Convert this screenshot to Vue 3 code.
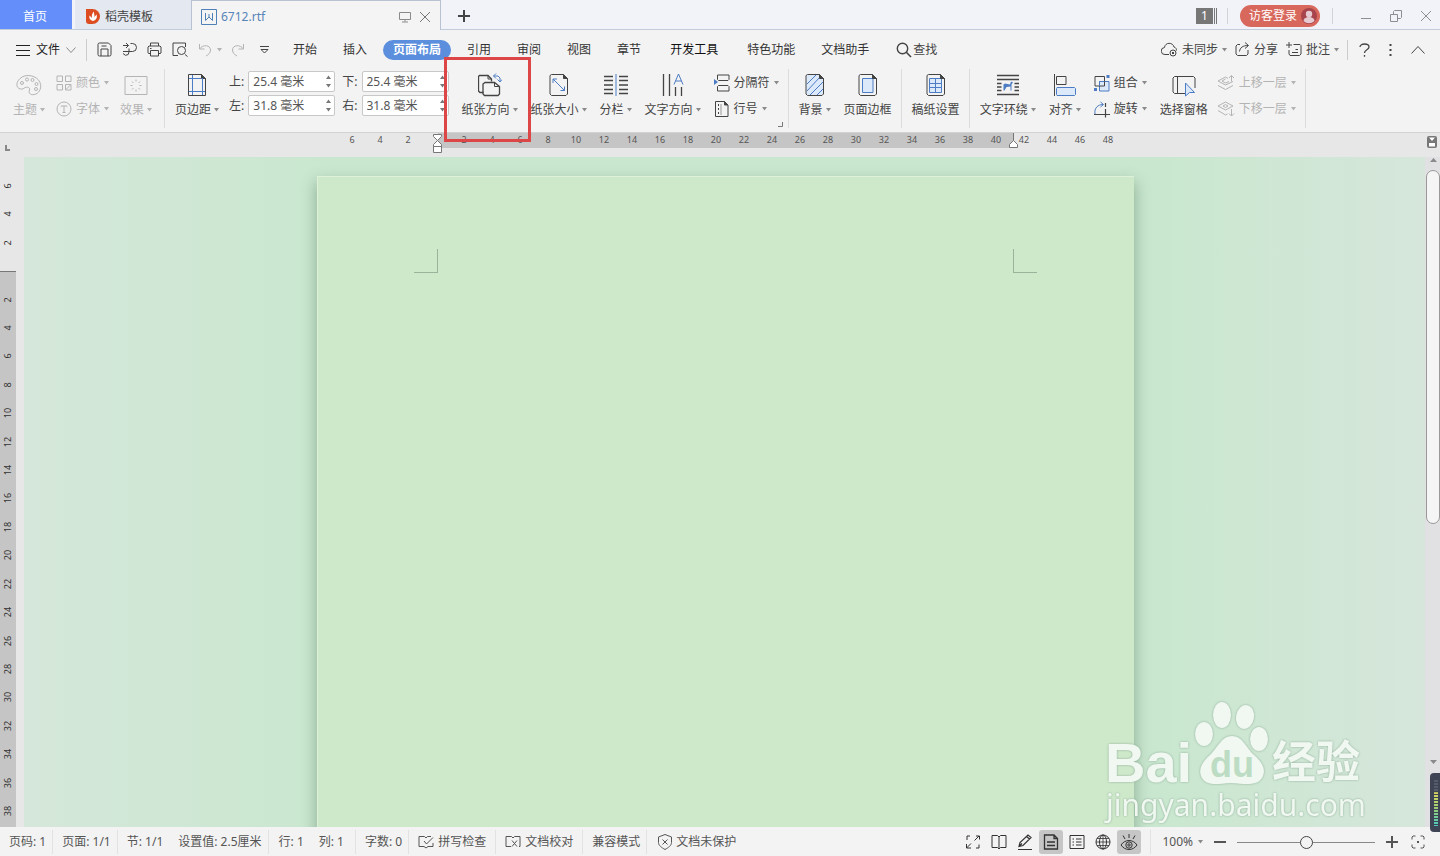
<script setup>
import { h, ref } from "vue";

// 图标：[宽, 高, 图形]
const icons = {
  caret: [5, 4, '<path d="M0 0h5L2.500 3.500z" fill="currentColor" stroke="none"/>'],
  docer: [14, 15, '<path d="M0 0h6.500a7.200 7.200 0 0 1 0 15H3a3 3 0 0 1-3-3z" fill="#dd4d22" stroke="none"/><path d="M7 12C3.500 11 3 8.500 3.500 6.500L6 9C5.500 6.500 6 4.500 8 2.500 8 5 8.500 6 8.500 8L10.500 5.500C11.500 8.500 10.500 11 7 12z" fill="#fff" stroke="none"/>'],
  word: [16, 16, '<g stroke="#4f80b8"><path d="M.5 .5h15v15H.5z"/><path d="M4.500 4v7.500L8 8l3.500 3.500V4M8 8V5"/></g>'],
  monitor: [12, 12, '<path d="M.5 1.500h11v7H.5zM6 8.500v2M3 11h6"/>'],
  close: [12, 12, '<path d="M1 1l10 10M11 1L1 11"/>'],
  plus: [12, 12, '<path d="M6 0v12M0 6h12" stroke-width="2"/>'],
  minus: [12, 12, '<path d="M0 6h12" stroke-width="2"/>'],
  restore: [12, 12, '<path d="M.5 4.500h7v7h-7zM3.500 4.500v-3l1-1h7v7l-1 1h-3"/>'],
  min: [12, 12, '<path d="M1 8.500h10"/>'],
  avatar: [16, 16, '<circle cx="8" cy="8" r="8" fill="#a8444c" stroke="none"/><circle cx="8" cy="6" r="3.200" fill="#e6ccd2" stroke="none"/><path d="M2.500 13a5.500 4 0 0 1 11 0 8 8 0 0 1-11 0z" fill="#e6ccd2" stroke="none"/>'],
  menu: [14, 12, '<path d="M0 1.500h14M0 6.500h14M0 11.500h14"/>'],
  down: [10, 8, '<path d="M.5 1.500L5 6.500l4.500-5"/>'],
  save: [15, 15, '<path d="M1 2.500a1.500 1.500 0 0 1 1.500-1.500h9L14 3.500v9a1.500 1.500 0 0 1-1.500 1.500h-10A1.500 1.500 0 0 1 1 12.500zM4 14V7h7v7M4.500 4h5"/>'],
  pdf: [15, 15, '<path d="M1 3.500h5.500M4 1l2.500 2.500L4 6M8.500 1.500h2a4 4 0 0 1 0 8H1M7 6.500v3.500a3.300 3.300 0 0 1-3.500 3.300L1 11.500"/>'],
  print: [15, 15, '<path d="M3.500 4V1h8v3M3.500 11.500h-2L1 11V5l1-1h11l1 1v6l-1 .5h-1.500M3.500 8.500h8V14h-8zM3 6.500h1.500"/>'],
  preview: [16, 15, '<path d="M6 13.500H1V1h12.500v4M13 12.500l2.500 2"/><circle cx="9.500" cy="8.500" r="4"/>'],
  undo: [14, 14, '<path d="M1.500 1v5h5M1.500 6C5 1 12.500 2 12.500 7c0 3-2 4.500-4.500 6"/>'],
  redo: [14, 14, '<path d="M12.500 1v5h-5M12.500 6C9 1 1.500 2 1.500 7c0 3 2 4.500 4.500 6"/>'],
  more: [9, 8, '<path d="M0 .5h9M1 3.500h7L4.500 7z"/>'],
  search: [16, 16, '<circle cx="6.500" cy="6.500" r="5.200" stroke-width="1.400"/><path d="M10.300 10.300L15 15" stroke-width="1.600"/>'],
  cloud: [17, 15, '<path d="M8 12.500H4a3.500 3.500 0 0 1-.5-7C4 0 12 0 13 5c1.800.5 2.500 1.800 2.500 3.500"/><circle cx="12" cy="11" r="3"/><path d="M11 10l2 2M13 10l-2 2"/>'],
  share: [15, 15, '<path d="M5 2.500H2.500L1 4v8l1.500 1.500h9L13 12V8M4.500 9.500C5 5.500 8 3.500 13 3.500M10 .5l3.500 3L10 6.500"/>'],
  note: [16, 15, '<path d="M3 0v6M0 3h6M7.500 2.500H14l1 1V12l-1.500 1.500H4L3 12V8M6 10.500h6M9.500 7.500H12"/>'],
  help: [11, 14, '<path d="M1 4C1 0 10 0 10 4c0 3-4.500 2.500-4.500 6M5.500 12v1.700" stroke-width="1.300"/>'],
  dots: [3, 14, '<path d="M.5 1h2v2h-2zM.5 6h2v2h-2zM.5 11h2v2h-2z" fill="currentColor" stroke="none"/>'],
  up: [14, 10, '<path d="M.5 8.500l6.500-7 6.500 7"/>'],
  theme: [26, 24, '<path d="M7 16C0 17-1 10 4 5.500c6-5.500 17-3 20 4 2 5-.5 10-4 11.500-5 2-8-.5-6.500-4 1-3-3.500-4-6.500-1z"/><circle cx="6" cy="10" r="1.500"/><circle cx="11" cy="6.500" r="1.500"/><circle cx="16.500" cy="7" r="1.500"/><circle cx="20.500" cy="11" r="1.500"/><circle cx="20" cy="16" r="1.500"/>'],
  colors: [16, 16, '<path d="M1 1h5.500v5.500H1zM9.500 1H15v5.500H9.500zM1 9.500h5.500V15H1zM9.500 9.500H15V15H9.500zM10 14.500l4.500-4.500"/>'],
  font: [16, 16, '<circle cx="8" cy="8" r="7"/><path d="M5 5.500V5h6v.5M8 5v6.500M6.500 11.500h3"/>'],
  effect: [24, 24, '<path d="M1 3.500h22v18H1z"/><path d="M12 6.500v2M12 16.500v2M6.500 12.500h2M15.500 12.500h2M8 8.500l1.500 1.500M16 8.500L14.500 10M8 16.500L9.500 15M16 16.500L14.500 15"/>'],
  margins: [20, 24, '<path d="M1.500 1.500h13l4 4v17h-17z"/><path d="M14.500 1.500v4h4z" fill="currentColor"/><path d="M5.500 2v20M15.500 5v17M2 5.500h12M2 18.500h16" stroke="#4c7cc4"/>'],
  orient: [24, 24, '<path d="M5.500 19.500H2L.5 18V3.500L1.500 2.500H10L13.500 6v2.500" stroke-width="1.300"/><path d="M7 9.500h9.500l5 4v7.500L20 22.500H6.500L5 21V11z" stroke-width="1.300"/><path d="M10 2.500V6h3.500M16.500 9.500v4h5" /><path d="M18 .5l-2.500 2.500L18 5.500M15.500 3H20l2 2v4M19.500 6.500L22 9l2-2.500" stroke="#4c7cc4"/>'],
  size: [20, 24, '<path d="M1 2.500L2.500 1.500h12l4 4v15.500L17 22.500H2.500L1 21z"/><path d="M14.500 1.500v4h4z" fill="currentColor"/><path d="M4 10V6h4M4 6l11.500 11.500M15.500 13.500v4h-4" stroke="#4c7cc4"/>'],
  columns: [24, 24, '<path d="M0 3.500h9M0 7.500h9M0 12h9M0 16.500h9M0 20.500h9M15 3.500h9M15 7.500h9M15 12h9M15 16.500h9M15 20.500h9" stroke-width="1.300"/><path d="M12 1v22" stroke="#4c7cc4"/>'],
  textdir: [22, 24, '<path d="M1.500 1v22M7.500 1v22M13.500 14v9M19.500 14v9" stroke-width="1.300"/><path d="M12 11.500L16.500 1 21 11.500M13.500 8h6" stroke="#4c7cc4"/>'],
  breaks: [16, 18, '<path d="M3.500 1v4.500l1 1H14l1-1V1M3.500 17v-4.500l1-1H14l1 1V17zM3.500 1H15"/><path d="M0 5v6l4-3z" fill="#4c7cc4" stroke="none"/>'],
  lineno: [16, 18, '<path d="M1.500 1.500h9l3.500 3.500v11.500H1.500z"/><path d="M10.500 1.500V5H14z" fill="currentColor"/><path d="M4.500 4v11" stroke-dasharray="2 2"/><path d="M7 4v11" stroke="#999"/>'],
  backdrop: [20, 24, '<path d="M1 2.500L2.500 1.500h12l4 4v15.500L17 22.500H2.500L1 21z" fill="#dce9fa"/><path d="M2 11l9-9M2 18L14.500 4.500M5 22L18 9M12 22l6-6" stroke="#4c7cc4"/><path d="M14.500 1.500v4h4z" fill="currentColor"/>'],
  border: [20, 24, '<path d="M1 2.500L2.500 1.500h12l4 4v15.500L17 22.500H2.500L1 21z"/><path d="M4.500 5.500h10.500v14H4.500z" stroke="#4c7cc4" fill="#dce9fa"/><path d="M14.500 1.500v4h4z" fill="currentColor"/>'],
  grid: [20, 24, '<path d="M1 2.500L2.500 1.500h12l4 4v15.500L17 22.500H2.500L1 21z"/><path d="M3.500 5.500h12v14h-12zM3.500 10.500h12M3.500 14.500h12M9.500 5.500v14" stroke="#4c7cc4" fill="#dce9fa"/><path d="M14.500 1.500v4h4z" fill="currentColor"/>'],
  wrap: [24, 24, '<path d="M1 2.500h22M1 6.500h22M1 10.500h4.500M18.500 10.500H23M1 14h4.500M18.500 14H23M1 17.500h4.500M18.500 17.500H23M1 21.500h22" stroke-width="1.300"/><path d="M7.500 17.500v-6l1.500-1 5 1 1-3 2 1-1.500 2v6h-1v-4l-4 .5-2 3.500z" fill="#4c7cc4" stroke="none"/>'],
  align: [24, 24, '<path d="M1.500 1v22M3.500 3.500H13v8H3.500z"/><path d="M4 14.500h17.500l1 1v6l-1 1H4l-.5-1v-6z" stroke="#4c7cc4" fill="#dce9fa"/>'],
  group: [16, 17, '<path d="M5.500 6.500H15V16H5.500z" stroke="#4c7cc4" fill="#dce9fa"/><path d="M1 1.500h9.500V11H1z"/><path d="M5.500 11V6.500h5" stroke="#4c7cc4"/><path d="M12.500 0h3v3h-3zM0 13h3v3H0z" fill="#4c7cc4" stroke="none"/>'],
  rotate: [16, 17, '<path d="M1 13C0 7 4 3.500 9 3.500M6.500 1l3 2.500-3 2.500" stroke="#4c7cc4"/><path d="M0 13.500h16M11.500 8v8.500M11.500 2v4" stroke-width="1.200"/>'],
  pane: [24, 24, '<path d="M13 20.500H2.500L1 19V5l1.500-1.500h19L23 5v10M5.500 3.500v17"/><path d="M13.500 10l9 9.500h-5L13.500 23z" stroke="#4c7cc4" fill="#dce9fa"/>'],
  forward: [18, 16, '<path d="M11 3.500L8.500 2 1 6l7.500 4L16 6.500M1 10.500l7.500 4 7.500-4M8.500 4L5 6l3.500 2L12 6.500M14.500 6.500V.5M12 3L14.500.5 17 3"/>'],
  backward: [18, 16, '<path d="M8.500 1L1 5l7.500 4L16 5zM8.500 3.500L6 5l2.500 1.500L11 5zM1 9.500L8.500 14l2-1M14.500 8v7M12 12.500l2.500 2.500 2.500-2.500"/>'],
  launcher: [5, 5, '<path d="M4.500 0v4.500H0"/>'],
  spell: [16, 14, '<path d="M8 3L6.500 1.500H1v10h5L8 13l2-1.500h5V8M8 3l1.500-1.500H13M6 6l2.500 3L15 2.500"/>'],
  proof: [16, 14, '<path d="M6 11.500H1v-10h5.500L8 3l1.500-1.500H15v10h-1M7 5.500l5 6M12 5.500l-5 6"/>'],
  shield: [14, 16, '<path d="M7 .5L13.500 3v5.500c0 3-3 5-6.500 7-3.500-2-6.500-4-6.500-7V3zM4.500 5.500l5 5M9.500 5.500l-5 5"/>'],
  full: [16, 16, '<path d="M2 6V2h3M11 2h3.500v3.500M14 10.500V14h-3M6 14H1.500v-4M14 2L9.500 6.500M1.500 14L6 9.500"/>'],
  book: [16, 16, '<path d="M8 3L6.500 1.500H1v12h5.500L8 15l1.500-1.500H15v-12H9.500zM8 3v12"/>'],
  pen: [16, 16, '<path d="M1 15.500h14M2 12.500l1-4L11 1l3 2.500-8 8zM9.500 2.500l3 2.500M2 12.500l3-3" stroke-width="1.200"/>'],
  doc: [16, 16, '<path d="M1.500 1h9.500l3.500 3.500V15h-13zM4 8h8M4 11.500h8M11 1v3.500h3.500" stroke-width="1.300"/>'],
  list: [16, 16, '<path d="M1 1.500h14v13H1zM3.500 5H5M3.500 8H5M3.500 11H5M7 5h5.500M7 8h5.500M7 11h5.500"/>'],
  globe: [16, 16, '<circle cx="8" cy="8" r="7"/><ellipse cx="8" cy="8" rx="3.500" ry="7"/><path d="M8 1v14M1 8h14M2 4.500h12M2 11.500h12" stroke-width=".8"/>'],
  eye: [18, 18, '<path d="M1 12c4-6 12-6 16 0-4 6-12 6-16 0zM9 1v4M3 2.500l2 3.500M15 2.500L13 6"/><circle cx="9" cy="12" r="3.200"/><circle cx="9" cy="12" r="1.200"/>'],
  fit: [14, 14, '<path d="M1 4.500V2l1-1h2.500M9.500 1H12l1 1v2.500M13 9.500V12l-1 1H9.500M4.500 13H2l-1-1V9.500"/><path d="M6 6h2v2H6z" fill="currentColor" stroke="none"/>'],
  rulerbtn: [10, 12, '<path d="M0 0h10v12H0z" fill="#777" stroke="none" /><path d="M2 1.500h6L5 5zM2 7h6v3.500H2z" fill="#fff" stroke="none"/>'],
  tri: [7, 4, '<path d="M0 0h7L3.500 4z" fill="#8a8a8a" stroke="none"/>'],
  indent: [9, 19, '<path d="M.5 .5h8v2l-4 4-4-4zM.5 12.500v-2l4-4 4 4v2zM.5 12.500h8v6h-8z" fill="#fff"/>'],
  indentR: [9, 8, '<path d="M.5 7.500v-3l4-4 4 4v3z" fill="#fff"/>'],
};

const Icon = (props) => {
  const [width, height, body] = icons[props.name];
  return h("svg", {
    width,
    height,
    viewBox: `0 0 ${width} ${height}`,
    fill: "none",
    stroke: "currentColor",
    "aria-hidden": "true",
    innerHTML: body,
  });
};
Icon.props = ["name"];

const menus = ["开始", "插入", "页面布局", "引用", "审阅", "视图", "章节", "开发工具", "特色功能", "文档助手"];
const activeMenu = ref("页面布局");

// 页边距
const margins = ref([
  { id: "top", label: "上:", value: "25.4 毫米" },
  { id: "bottom", label: "下:", value: "25.4 毫米" },
  { id: "left", label: "左:", value: "31.8 毫米" },
  { id: "right", label: "右:", value: "31.8 毫米" },
]);

const layoutTools = [
  { icon: "orient", label: "纸张方向", marked: true },
  { icon: "size", label: "纸张大小" },
  { icon: "columns", label: "分栏" },
  { icon: "textdir", label: "文字方向" },
];

// 标尺刻度，0 处不写数字
const scale = (before, after) => {
  const list = [];
  for (let i = -before; i <= after; i += 2) list.push(i === 0 ? "" : Math.abs(i));
  return list;
};
const hScale = scale(6, 48);
const vScale = scale(6, 38);

const views = ["full", "book", "pen", "doc", "list", "globe", "eye"];
const viewNames = ["全屏显示", "阅读版式", "写作模式", "页面视图", "大纲", "Web版式", "护眼模式"];
const zoom = ref(50);
</script>

<template>
  <div class="app">
    <header class="titlebar">
      <button class="home">首页</button>
      <button class="doc-tab"><Icon name="docer" />稻壳模板</button>
      <div class="doc-tab current">
        <Icon name="word" />
        <span class="doc-name">6712.rtf</span>
        <Icon name="monitor" class="grey" />
        <button aria-label="关闭"><Icon name="close" /></button>
      </div>
      <button class="new-tab" aria-label="新建"><Icon name="plus" /></button>
      <div class="window-tools">
        <span class="count">1</span>
        <button class="login">访客登录<Icon name="avatar" /></button>
        <button aria-label="最小化"><Icon name="min" /></button>
        <button aria-label="还原"><Icon name="restore" /></button>
        <button aria-label="关闭窗口"><Icon name="close" /></button>
      </div>
    </header>

    <nav class="menubar">
      <button class="file"><Icon name="menu" />文件<Icon name="down" class="grey" /></button>
      <div class="quick">
        <button aria-label="保存"><Icon name="save" /></button>
        <button aria-label="输出为PDF"><Icon name="pdf" /></button>
        <button aria-label="打印"><Icon name="print" /></button>
        <button aria-label="打印预览"><Icon name="preview" /></button>
        <button class="undo" aria-label="撤销" disabled><Icon name="undo" /><Icon name="caret" /></button>
        <button aria-label="恢复" disabled><Icon name="redo" /></button>
        <button class="quick-more" aria-label="自定义快速访问"><Icon name="more" /></button>
      </div>
      <div class="menus">
        <button
          v-for="menu in menus"
          :key="menu"
          :class="{ active: menu === activeMenu, dev: menu === '开发工具' }"
          @click="activeMenu = menu"
        >
          {{ menu }}
        </button>
      </div>
      <button class="find"><Icon name="search" />查找</button>
      <div class="menu-right">
        <button><Icon name="cloud" />未同步<Icon name="caret" class="grey" /></button>
        <button><Icon name="share" />分享</button>
        <button><Icon name="note" />批注<Icon name="caret" class="grey" /></button>
        <span class="line"></span>
        <button aria-label="帮助"><Icon name="help" /></button>
        <button aria-label="更多"><Icon name="dots" /></button>
        <button aria-label="收起功能区"><Icon name="up" /></button>
      </div>
    </nav>

    <section class="ribbon">
      <div class="group theme-group">
        <button class="big" disabled><Icon name="theme" /><span>主题<Icon name="caret" /></span></button>
        <div class="stack">
          <button disabled><Icon name="colors" />颜色<Icon name="caret" /></button>
          <button disabled><Icon name="font" />字体<Icon name="caret" /></button>
        </div>
        <button class="big" disabled><Icon name="effect" /><span>效果<Icon name="caret" /></span></button>
      </div>

      <div class="group">
        <button class="big"><Icon name="margins" /><span>页边距<Icon name="caret" /></span></button>
        <div class="fields">
          <div v-for="item in margins" :key="item.id" class="field">
            <label :for="item.id">{{ item.label }}</label>
            <div class="spin">
              <input :id="item.id" v-model="item.value" type="text" />
              <div class="arrows">
                <Icon name="caret" class="flip" />
                <Icon name="caret" />
              </div>
            </div>
          </div>
        </div>
        <button v-for="tool in layoutTools" :key="tool.icon" class="big" :class="{ marked: tool.marked }">
          <Icon :name="tool.icon" />
          <span>{{ tool.label }}<Icon name="caret" /></span>
        </button>
        <div class="stack">
          <button><Icon name="breaks" />分隔符<Icon name="caret" /></button>
          <button><Icon name="lineno" />行号<Icon name="caret" /></button>
        </div>
        <Icon name="launcher" class="launcher" />
      </div>

      <div class="group">
        <button class="big"><Icon name="backdrop" /><span>背景<Icon name="caret" /></span></button>
        <button class="big"><Icon name="border" /><span>页面边框</span></button>
      </div>
      <div class="group">
        <button class="big"><Icon name="grid" /><span>稿纸设置</span></button>
      </div>
      <div class="group">
        <button class="big"><Icon name="wrap" /><span>文字环绕<Icon name="caret" /></span></button>
        <button class="big"><Icon name="align" /><span>对齐<Icon name="caret" /></span></button>
        <div class="stack">
          <button><Icon name="group" />组合<Icon name="caret" /></button>
          <button><Icon name="rotate" />旋转<Icon name="caret" /></button>
        </div>
        <button class="big"><Icon name="pane" /><span>选择窗格</span></button>
        <div class="stack layers">
          <button disabled><Icon name="forward" />上移一层<Icon name="caret" /></button>
          <button disabled><Icon name="backward" />下移一层<Icon name="caret" /></button>
        </div>
      </div>
    </section>

    <div class="ruler-bar">
      <span class="tab-stop"></span>
      <div class="h-ruler">
        <div class="h-range">
          <Icon name="indent" class="indent-left" />
          <Icon name="indentR" class="indent-right" />
        </div>
        <span v-for="(n, i) in hScale" :key="i">{{ n }}</span>
      </div>
      <Icon name="rulerbtn" class="ruler-btn" />
    </div>

    <main class="workspace">
      <div class="v-ruler">
        <div class="v-range"></div>
        <span v-for="(n, i) in vScale" :key="i">{{ n }}</span>
      </div>
      <div class="canvas">
        <article class="page">
          <i class="crop crop-left"></i>
          <i class="crop crop-right"></i>
        </article>
        <svg class="watermark" width="270" height="130" viewBox="0 0 270 130">
          <g class="mark">
            <text x="4" y="84" class="brand">Bai</text>
            <ellipse cx="103" cy="36" rx="9" ry="12" />
            <ellipse cx="121" cy="17" rx="9" ry="13" />
            <ellipse cx="144" cy="19" rx="9" ry="12" transform="rotate(10 144 19)" />
            <ellipse cx="158" cy="41" rx="9" ry="12" />
            <path d="M131 38c10 0 14 11 21 18 9 8 14 15 9 24-5 8-16 6-31 5-15 1-24 3-29-5-5-9 1-17 9-24 7-7 11-18 21-18z" />
            <text x="171" y="80" class="jingyan">经验</text>
            <text x="5" y="118" class="url">jingyan.baidu.com</text>
          </g>
          <text x="109" y="79" class="du">du</text>
        </svg>
      </div>
      <div class="scrollbar">
        <Icon name="tri" class="flip" />
        <div class="track"><div class="thumb"></div></div>
        <Icon name="tri" />
        <div class="meter"><i></i></div>
      </div>
    </main>

    <footer class="statusbar">
      <span class="cell">页码: 1</span>
      <span class="cell">页面: 1/1</span>
      <span class="cell"><span>节: 1/1</span><span>设置值: 2.5厘米</span></span>
      <span class="cell pos"><span>行: 1</span><span>列: 1</span></span>
      <span class="cell">字数: 0</span>
      <button class="cell"><Icon name="spell" />拼写检查</button>
      <button class="cell"><Icon name="proof" />文档校对</button>
      <span class="cell">兼容模式</span>
      <button class="cell protect"><Icon name="shield" />文档未保护</button>
      <div class="views">
        <button
          v-for="(view, i) in views"
          :key="view"
          :class="{ on: view === 'doc' || view === 'eye' }"
          :aria-label="viewNames[i]"
        >
          <Icon :name="view" />
        </button>
      </div>
      <div class="zoom">
        <button class="percent">100%<Icon name="caret" class="grey" /></button>
        <button aria-label="缩小" @click="zoom -= 5"><Icon name="minus" /></button>
        <input v-model.number="zoom" type="range" min="0" max="100" aria-label="显示比例" />
        <button aria-label="放大" @click="zoom += 5"><Icon name="plus" /></button>
        <button class="fit" aria-label="最佳显示比例"><Icon name="fit" /></button>
      </div>
    </footer>
  </div>
</template>

<style>
body {
  margin: 0;
  overflow: hidden;
}
</style>

<style scoped>
.app {
  height: 100vh;
  display: flex;
  flex-direction: column;
  background: #f3f3f3;
  color: #444;
  font-family: "Noto Sans", "Noto Sans CJK SC", sans-serif;
  font-size: 12px;
  line-height: 16px;
  white-space: nowrap;
}

.app * {
  box-sizing: border-box;
}

svg {
  display: block;
  flex: none;
}

button {
  display: flex;
  align-items: center;
  padding: 0;
  border: 0;
  background: none;
  color: inherit;
  font: inherit;
}

button:disabled {
  color: #b4b4b4;
}

.grey {
  color: #8a8a8a;
}

.flip {
  transform: rotate(180deg);
}

/* 标题栏 */
.titlebar {
  height: 30px;
  flex: none;
  display: flex;
  background: #f1f3f8;
  border-bottom: 1px solid #c3ccdb;
}

.home {
  width: 72px;
  padding: 4px 2px 0 0;
  justify-content: center;
  background: #648ffa;
  color: #fff;
}

.doc-tab {
  width: 116px;
  margin-left: 3px;
  padding: 4px 11px 0;
  gap: 5px;
  background: #e4e8f0;
}

.doc-tab.current {
  width: 250px;
  height: 30px;
  margin-left: 0;
  padding: 3px 9px 0;
  gap: 4px;
  display: flex;
  align-items: center;
  background: #f4f4f5;
  border: 1px solid #b9c2d3;
  border-bottom: 0;
}

.doc-name {
  flex: 1;
  color: #5784b8;
}

.doc-tab.current button {
  margin-left: 4px;
  color: #777;
}

.new-tab {
  margin-left: 17px;
  padding-top: 3px;
}

.window-tools {
  margin-left: auto;
  padding: 3px 8px 0 0;
  display: flex;
  align-items: center;
  gap: 18px;
}

.count {
  width: 22px;
  height: 16px;
  padding-left: 5px;
  background: linear-gradient(90deg, #777 17px, transparent 17px 18px, #777 18px 19px, transparent 19px 20px, #777 20px 21px, transparent 21px);
  color: #fff;
}

.login {
  position: relative;
  height: 22px;
  width: 80px;
  margin: 0 22px 0 4px;
  padding-left: 9px;
  gap: 4px;
  border-radius: 11px;
  background: #d8685c;
  color: #fff;
}

.login::before,
.login::after {
  content: "";
  position: absolute;
  left: -13px;
  width: 1px;
  height: 16px;
  background: #d0d3d9;
}

.login::after {
  left: 92px;
}

.window-tools button:not(.login) {
  color: #8d8d93;
}

/* 菜单栏 */
.menubar {
  height: 37px;
  flex: none;
  padding: 2px 15px 0 16px;
  display: flex;
  align-items: center;
}

.file {
  height: 22px;
  padding-right: 10px;
  gap: 6px;
  border-right: 1px solid #ccc;
  color: #222;
}

.quick {
  margin-left: 10px;
  display: flex;
  gap: 10px;
}

.quick .undo {
  gap: 5px;
  margin-right: -1px;
}

.quick-more {
  margin: 0 3px 0 5px;
}

.menus {
  margin-left: 8px;
  display: flex;
  color: #333;
}

.menus button {
  height: 20px;
  padding: 0 13px;
}

.menus .active {
  margin: 0 3px;
  padding: 0 10px;
  border-radius: 10px;
  background: #5b8fdd;
  color: #fff;
  font-weight: 700;
}

.menus .dev {
  margin: 0 3px;
  color: #111;
}

.find {
  margin-left: 14px;
  gap: 1px;
}

.menu-right {
  margin-left: auto;
  display: flex;
  align-items: center;
}

.menu-right button {
  gap: 4px;
  margin-right: 8px;
}

.menu-right .line {
  height: 20px;
  margin-right: 11px;
  border-left: 1px solid #ccc;
}

.menu-right .line ~ button {
  margin-right: 19px;
}

.menu-right .line ~ button:last-child {
  margin-right: 0;
}

/* 功能区 */
.ribbon {
  height: 65px;
  flex: none;
  padding: 2px 0 4px;
  display: flex;
}

.group {
  position: relative;
  display: flex;
  align-items: flex-start;
  gap: 13px;
  padding: 2px 9px 0 10px;
  border-right: 1px solid #dcdcdc;
}

.theme-group {
  gap: 11px;
  padding: 2px 12px 0 13px;
}

.big {
  padding-top: 2px;
  flex-direction: column;
  gap: 5px;
}

.big > span {
  display: flex;
  align-items: center;
  gap: 3px;
}

.big span svg,
.stack button svg:last-child {
  color: #8a8a8a;
}

.big:disabled span svg,
.stack button:disabled svg:last-child {
  color: #b4b4b4;
}

.stack {
  padding-top: 3px;
  display: grid;
  gap: 8px;
}

.stack button {
  height: 18px;
  gap: 4px;
}

.layers {
  margin-left: -4px;
}

.fields {
  margin-left: -3px;
  display: grid;
  grid-template-columns: auto auto;
  gap: 3px 7px;
}

.field {
  display: flex;
  align-items: center;
  gap: 4px;
}

.spin {
  width: 87px;
  height: 21px;
  display: flex;
  border: 1px solid #c8c8c8;
  border-radius: 2px;
  background: #fff;
}

.spin input {
  width: 74px;
  padding: 0 0 0 4px;
  border: 0;
  background: none;
  color: #555;
  font: inherit;
}

.arrows {
  flex: 1;
  padding: 3px 0;
  display: flex;
  flex-direction: column;
  align-items: center;
  justify-content: space-between;
  color: #777;
}

.marked {
  position: relative;
}

.marked::after {
  content: "";
  position: absolute;
  z-index: 5;
  inset: -14px -13px -24px -18px;
  border: 3px solid #dc4646;
}

.launcher {
  position: absolute;
  right: 5px;
  bottom: 1px;
  color: #777;
}

/* 水平标尺 */
.ruler-bar {
  position: relative;
  height: 25px;
  flex: none;
  padding: 0 15px 0 26px;
  background: #e7e7e7;
  border-top: 1px solid #d2d2d2;
}

.tab-stop {
  position: absolute;
  left: 5px;
  top: 12px;
  width: 5px;
  height: 6px;
  border: solid #888;
  border-width: 0 0 2px 2px;
}

.h-ruler {
  position: relative;
  width: 817px;
  margin: 0 auto;
  padding-left: 21px;
  display: flex;
  color: #555;
  font-size: 9px;
  line-height: 14px;
}

.h-ruler span {
  position: relative;
  width: 28px;
  flex: none;
  text-align: center;
}

.h-range {
  position: absolute;
  left: 121px;
  right: 120px;
  top: 0;
  height: 15px;
  background: #c5c5c5;
  border-right: 1px solid #777;
}

.indent-left,
.indent-right {
  position: absolute;
  color: #777;
  left: -5px;
  top: 1px;
}

.indent-right {
  left: auto;
  right: -5px;
  top: 7px;
}

.ruler-btn {
  position: absolute;
  right: 3px;
  top: 3px;
  border-radius: 2px;
}

/* 编辑区 */
.workspace {
  flex: 1;
  min-height: 0;
  display: flex;
}

.v-ruler {
  position: relative;
  width: 24px;
  padding: 23px 8px 10px 0;
  display: flex;
  flex-direction: column;
  justify-content: space-between;
  align-items: center;
  background: #e7e7e7;
  color: #333;
  font-size: 9px;
  line-height: 12px;
}

.v-ruler span {
  position: relative;
  width: 12px;
  height: 12px;
  display: flex;
  justify-content: center;
  transform: rotate(-90deg);
}

.v-range {
  position: absolute;
  left: 0;
  top: 114px;
  bottom: 0;
  width: 16px;
  background: #c5c5c5;
  border-top: 1px solid #777;
}

.canvas {
  position: relative;
  flex: 1;
  overflow: hidden;
  padding: 19px 0 0 2px;
  background: linear-gradient(90deg, #d5e7da, #c9e7cf 22%, #c9e7cf 81%, #d6e6db);
}

.page {
  position: relative;
  width: 817px;
  height: 1200px;
  margin: 0 auto;
  background: #cee8ca;
  border: solid #dff0db;
  border-width: 1px 0 0 1px;
  box-shadow: 0 7px 14px 1px rgba(70, 110, 80, 0.45);
}

.crop {
  position: absolute;
  top: 72px;
  width: 24px;
  height: 24px;
  border: 0 solid #9bb39a;
  border-bottom-width: 1px;
}

.crop-left {
  left: 96px;
  border-right-width: 1px;
}

.crop-right {
  right: 97px;
  border-left-width: 1px;
}

.watermark {
  position: absolute;
  right: 54px;
  bottom: -1px;
}

.mark {
  fill: #f0f8f1;
  filter: drop-shadow(0 0 1px #8fae98);
}

.brand {
  font: 700 56px "Liberation Sans", sans-serif;
}

.du {
  font: 700 36px "Liberation Sans", sans-serif;
  fill: #bddcc4;
}

.jingyan {
  font: 700 44px "Noto Sans CJK SC", sans-serif;
}

.url {
  font: 30px "Noto Sans", sans-serif;
}

.scrollbar {
  position: relative;
  width: 15px;
  padding: 1px 0 63px 1px;
  display: flex;
  flex-direction: column;
  align-items: center;
  background: #e1e0e2;
}

.track {
  align-self: stretch;
  flex: 1;
  padding-top: 8px;
}

.thumb {
  height: 60%;
  border: 1px solid #999;
  border-radius: 7px;
  background: #f5f5f5;
}

.meter {
  position: absolute;
  z-index: 3;
  right: 0;
  bottom: -5px;
  width: 10px;
  height: 59px;
  padding: 6px 2px 6px 4px;
  border-radius: 4px 0 0 4px;
  background: #3f4454;
}

.meter i {
  display: block;
  height: 100%;
  background:
    repeating-linear-gradient(#3f4454 0 1px, transparent 1px 3px),
    linear-gradient(#565b6c 25%, #d8d560 30%, #9fd070 60%, #4cc8c0);
}

/* 状态栏 */
.statusbar {
  height: 29px;
  flex: none;
  padding: 1px 15px 0 0;
  display: flex;
  align-items: center;
  color: #555;
}

.cell {
  height: 24px;
  display: flex;
  align-items: center;
  gap: 4px;
  padding: 0 6px 0 9px;
  border-right: 1px solid #e2e2e2;
}

.cell span + span {
  margin-left: 11px;
}

.pos {
  padding: 0 11px 0 10px;
}

button.cell {
  padding-right: 9px;
}

.protect {
  padding-left: 11px;
  border: 0;
}

.views {
  margin-left: auto;
  padding-right: 9px;
  display: flex;
  gap: 2px;
  color: #333;
  border-right: 1px solid #e2e2e2;
}

.views button {
  width: 24px;
  height: 24px;
  justify-content: center;
  border-radius: 3px;
}

.views .on {
  background: #c6c6c6;
}

.zoom {
  padding-left: 11px;
  display: flex;
  align-items: center;
  gap: 11px;
}

.percent {
  gap: 5px;
}

.zoom .fit {
  margin-left: 2px;
}

.zoom input {
  appearance: none;
  width: 138px;
  height: 14px;
  margin: 0;
  background: linear-gradient(#888, #888) center / 100% 1px no-repeat;
}

.zoom input::-webkit-slider-thumb {
  appearance: none;
  width: 13px;
  height: 13px;
  border: 1px solid #444;
  border-radius: 50%;
  background: #f3f3f3;
}
</style>
